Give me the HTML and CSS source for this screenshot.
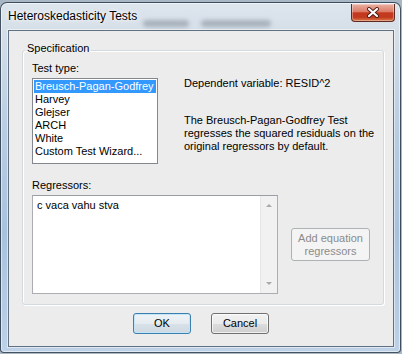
FILE: index.html
```html
<!DOCTYPE html>
<html lang="en">
<head>
    <meta charset="UTF-8">
    <title>Heteroskedasticity Tests</title>
    <link rel="stylesheet" href="styles.css">
</head>
<body>
<div class="window">
    <div class="titlebar">
        <span class="title">Heteroskedasticity Tests</span>
        <span class="haze haze-a"></span>
        <span class="haze haze-b"></span>
        <button class="close" type="button">
            <svg width="14" height="11" viewBox="0 0 14 11">
                <path d="M3 2 L11 9 M11 2 L3 9" stroke="#4a1a12" stroke-width="4" stroke-linecap="round"/>
                <path d="M3 2 L11 9 M11 2 L3 9" stroke="#fff" stroke-width="2.2" stroke-linecap="round"/>
            </svg>
        </button>
    </div>
    <div class="client">
        <fieldset class="group">
            <legend>Specification</legend>
            <div class="spec">
                <div class="test-col">
                    <div class="label">Test type:</div>
                    <ul class="listbox">
                        <li class="selected">Breusch-Pagan-Godfrey</li>
                        <li>Harvey</li>
                        <li>Glejser</li>
                        <li>ARCH</li>
                        <li>White</li>
                        <li>Custom Test Wizard...</li>
                    </ul>
                </div>
                <div class="info">
                    <p>Dependent variable: RESID^2</p>
                    <p class="desc">The Breusch-Pagan-Godfrey Test<br>regresses the squared residuals on the<br>original regressors by default.</p>
                </div>
            </div>
            <div class="label reg-label">Regressors:</div>
            <div class="reg-row">
                <div class="textbox">
                    <div class="textbox-text">c vaca vahu stva</div>
                    <div class="vscroll">
                        <span class="arrow up"></span>
                        <span class="arrow down"></span>
                    </div>
                </div>
                <button class="btn disabled" type="button">Add equation<br>regressors</button>
            </div>
        </fieldset>
        <div class="buttons">
            <button class="btn default" type="button">OK</button>
            <button class="btn" type="button">Cancel</button>
        </div>
    </div>
</div>
</body>
</html>
```
FILE: styles.css
```css
*{
    margin:0;
    padding:0;
    box-sizing:border-box;
}
body{
    background:#a9b7c5;
    font-family:"Liberation Sans", Arial, sans-serif;
    font-size:11px;
    color:#000;
    width:402px;
    height:354px;
    overflow:hidden;
}
.window{
    width:401px;
    height:351px;
    margin-top:2px;
    border:1px solid rgba(30,45,62,.8);
    border-radius:7px 7px 4px 4px;
    background:linear-gradient(to bottom,#dde5ed 0,#d6dfe8 28px,#bccfe3 110px,#a9c2dc 230px,#bdd1e7 100%);
    box-shadow:inset 0 0 0 1px rgba(255,255,255,.55);
    padding:0 6px 5px 7px;
    display:flex;
    flex-direction:column;
}
.titlebar{
    height:27px;
    display:flex;
    align-items:flex-start;
    margin:0 -6px 0 -7px;
}
.title{
    font-size:12px;
    line-height:16px;
    margin:5px 0 0 7px;
    text-shadow:0 0 6px #fff,0 0 3px #fff;
}
.haze{
    height:7px;
    margin-top:17px;
    border-radius:4px;
    background:#7f8b98;
    filter:blur(2px);
    opacity:.55;
}
.haze-a{
    width:46px;
    margin-left:6px;
}
.haze-b{
    width:70px;
    margin-left:12px;
}
.close{
    width:44px;
    height:18px;
    margin:1px 5px 0 auto;
    border:1px solid #5e2a22;
    border-top:none;
    border-radius:0 0 4px 4px;
    background:linear-gradient(to bottom,#eab0a2 0%,#dc7c68 45%,#c5381e 52%,#c03a1f 78%,#df7a47 100%);
    box-shadow:inset 0 0 0 1px rgba(255,255,255,.35);
    display:flex;
    align-items:center;
    justify-content:center;
}
.close svg{
    display:block;
}
.client{
    height:317px;
    border:1px solid #607183;
    background:#ececec;
    box-shadow:0 0 0 1px rgba(255,255,255,.5);
}
.group{
    margin:11px 9px 0 13px;
    border:1px solid #d2d9df;
    border-radius:3px;
    box-shadow:inset 1px 1px 0 #fff,1px 1px 0 #fff;
    padding:3px 9px 10px 9px;
}
.group legend{
    line-height:13px;
    padding:0 2px 4px;
    margin-left:-7px;
}
.label{
    line-height:13px;
}
.spec{
    display:flex;
}
.test-col{
    width:126px;
}
.listbox{
    list-style:none;
    margin-top:3px;
    height:86px;
    border:1px solid #828790;
    background:#fff;
    padding:1px;
}
.listbox li{
    line-height:13px;
    height:13px;
    padding-left:1px;
    white-space:nowrap;
}
.listbox .selected{
    background:#3399ff;
    color:#fff;
}
.info{
    margin:15px 0 0 26px;
    white-space:nowrap;
}
.info p{
    line-height:13px;
}
.info .desc{
    margin-top:24px;
}
.reg-label{
    margin-top:15px;
}
.reg-row{
    display:flex;
    align-items:center;
    margin-top:3px;
}
.textbox{
    width:246px;
    height:99px;
    border:1px solid #abadb3;
    border-top-color:#9a9ea6;
    background:#fff;
    display:flex;
}
.textbox-text{
    flex:1;
    padding:3px 0 0 4px;
    line-height:13px;
}
.vscroll{
    width:17px;
    background:#f1f1f1;
    border-left:1px solid #e6e6e6;
    display:flex;
    flex-direction:column;
    justify-content:space-between;
    align-items:center;
    padding:8px 0 8px;
}
.arrow{
    width:0;
    height:0;
    border-left:3px solid transparent;
    border-right:3px solid transparent;
}
.arrow.up{
    border-bottom:3px solid #a9a9a9;
}
.arrow.down{
    border-top:3px solid #a9a9a9;
}
.btn{
    font-family:"Liberation Sans", Arial, sans-serif;
    font-size:11px;
    line-height:13px;
    color:#000;
    border:1px solid #707070;
    border-radius:3px;
    background:linear-gradient(to bottom,#f2f2f2 0%,#ebebeb 50%,#dddddd 51%,#cfcfcf 100%);
    box-shadow:inset 0 0 0 1px rgba(255,255,255,.7);
}
.btn.disabled{
    width:79px;
    height:33px;
    margin-left:13px;
    color:#8b8b8b;
    border-color:#adb2b5;
    background:#f4f4f4;
    box-shadow:none;
}
.buttons{
    display:flex;
    justify-content:center;
    gap:20px;
    margin-top:8px;
}
.buttons .btn{
    width:58px;
    height:21px;
}
.btn.default{
    border-color:#3c7fb1;
    box-shadow:inset 0 0 0 1px #c4e5f6;
    background:linear-gradient(to bottom,#eef3f6 0%,#e5ecf1 50%,#d8e1e8 51%,#cfd9e1 100%);
}
```
